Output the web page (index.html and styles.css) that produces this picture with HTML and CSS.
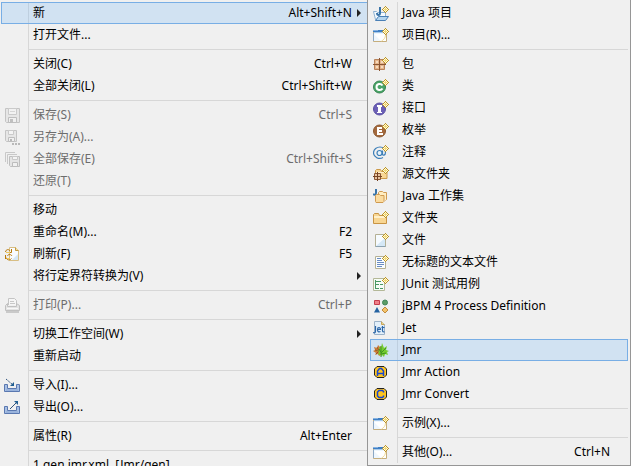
FILE: index.html
```html
<!DOCTYPE html>
<html lang="zh-CN">
<head>
<meta charset="UTF-8" />
<meta name="viewport" content="width=device-width, initial-scale=1" />
<title>文件</title>
<link rel="stylesheet" href="styles.css">
</head>
<body>

<!-- Shared icon parts -->
<svg class="defs" aria-hidden="true">
  <symbol id="star" viewBox="0 0 16 16">
    <path d="M12 1h1v2h1v1h2v1h-2v1h-1v2h-1V6h-1V5H9V4h2V3h1z" fill="#fffbd8"/>
    <path d="M12 1h1v1h-1zM11 2h1v1h-1zM13 2h1v1h-1zM10 3h1v1h-1zM14 3h1v1h-1zM9 4h1v1H9zM15 4h1v1h-1zM10 5h1v1h-1zM14 5h1v1h-1zM11 6h1v1h-1zM13 6h1v1h-1zM12 7h1v1h-1z" fill="#bd9426"/>
    <path d="M12 3h1v1h1v1h-1v1h-1V5h-1V4h1z" fill="#f2d774"/>
  </symbol>
  <symbol id="window" viewBox="0 0 16 16">
    <path d="M.5 3.500h13v11h-13z" fill="#eef6fd" stroke="#c6ae7c"/>
    <path d="M1 7h12v7H8z" fill="#fff"/>
    <path d="M0 3h10v2H0z" fill="#3f7fc4"/><path d="M0 3h5v1H0z" fill="#86b2e0"/>
    <path d="M1 5h9v1H1z" fill="#a8cbed"/>
    <path d="M.5 6v8" stroke="#8ba7c4"/>
    <path d="M12.500 8c0 3-2 5-4 6" fill="none" stroke="#f1dc9c"/>
    <use href="#star"/>
  </symbol>
  <symbol id="floppy" viewBox="0 0 16 16">
    <path d="M1.500 1.500h14v14h-13l-1-1z" fill="#e6e6e6" stroke="#c4c4c4"/>
    <path d="M4.500 1.500h8v6h-8z" fill="#f2f2f2" stroke="#cacaca"/>
    <path d="M6 4.500h5" stroke="#d6d6d6"/>
    <path d="M4.500 10.500h8v5h-8z" fill="#f0f0f0" stroke="#bebebe"/>
    <path d="M6 12h3v3H6z" fill="#c0c0c0"/>
  </symbol>
</svg>

<div class="screen">
  <div class="menu file-menu" role="menu">
    <button class="item active" role="menuitem"><span class="icon"></span><span class="label">新</span><kbd>Alt+Shift+N</kbd><i class="arrow"></i></button>
    <button class="item" role="menuitem"><span class="icon"></span><span class="label">打开文件...</span></button>
    <div class="separator"></div>
    <button class="item" role="menuitem"><span class="icon"></span><span class="label">关闭(C)</span><kbd>Ctrl+W</kbd></button>
    <button class="item" role="menuitem"><span class="icon"></span><span class="label">全部关闭(L)</span><kbd>Ctrl+Shift+W</kbd></button>
    <div class="separator"></div>
    <button class="item" role="menuitem" disabled><span class="icon"><svg viewBox="0 0 16 16"><use href="#floppy"/></svg></span><span class="label">保存(S)</span><kbd>Ctrl+S</kbd></button>
    <button class="item" role="menuitem" disabled><span class="icon"><svg viewBox="0 0 16 16"><path d="M1.500 1.500h11v11h-10l-1-1z" fill="#e6e6e6" stroke="#c4c4c4"/><path d="M4.500 1.500h5v4h-5z" fill="#f4f4f4" stroke="#cacaca"/><path d="M4.500 8.500h6v4h-6z" fill="#f0f0f0" stroke="#bebebe"/><path d="M6 10h2v2H6zM8 14h2v2H8zM11 14h2v2h-2zM14 14h2v2h-2z" fill="#b8b8b8"/></svg></span><span class="label">另存为(A)...</span></button>
    <button class="item" role="menuitem" disabled><span class="icon"><svg viewBox="0 0 16 16"><path d="M1.500 11V1.500H11M3.500 13V3.500H13" fill="none" stroke="#c8c8c8"/><path d="M5.500 5.500h10v10h-9l-1-1z" fill="#e4e4e4" stroke="#bebebe"/><path d="M8.500 5.500h5v3h-5z" fill="#f4f4f4" stroke="#c8c8c8"/><path d="M8.500 11.500h5v4h-5z" fill="#f0f0f0" stroke="#bcbcbc"/></svg></span><span class="label">全部保存(E)</span><kbd>Ctrl+Shift+S</kbd></button>
    <button class="item" role="menuitem" disabled><span class="icon"></span><span class="label">还原(T)</span></button>
    <div class="separator"></div>
    <button class="item" role="menuitem"><span class="icon"></span><span class="label">移动</span></button>
    <button class="item" role="menuitem"><span class="icon"></span><span class="label">重命名(M)...</span><kbd>F2</kbd></button>
    <button class="item" role="menuitem"><span class="icon"><svg viewBox="0 0 16 16"><path d="M5.500 1.500h6l3 3v10h-9z" fill="#f8fbff" stroke="#d8be84"/><path d="M8 14h6V8z" fill="#d5e7f6"/><path d="M11.500 1.500v3h3" fill="#f5e2a8" stroke="#c29a3e"/><path d="M1.500 6C2 3 5 3 6 5M7.500 3v3.500H4M8 10C7 8 4 8 3.500 10M1.500 9v4M2 11.500c1 3 4 3 5.500 1" fill="none" stroke="#b97908"/><path d="M2 6.500h4M3 12.500h3" stroke="#f0c860"/></svg></span><span class="label">刷新(F)</span><kbd>F5</kbd></button>
    <button class="item" role="menuitem"><span class="icon"></span><span class="label">将行定界符转换为(V)</span><i class="arrow"></i></button>
    <div class="separator"></div>
    <button class="item" role="menuitem" disabled><span class="icon"><svg viewBox="0 0 16 16"><path d="M4.500 8V1.500h6l2 2V8" fill="#f6f6f6" stroke="#c4c4c4"/><path d="M6 4.500h4M6 6.500h5" stroke="#c8c8c8"/><path d="M1.500 8.500l2-2v3h9v-3l3 2v5h-14z" fill="#e4e4e4" stroke="#c0c0c0"/><path d="M3 11.500h11" stroke="#f8f8f8"/><path d="M2 14h13v2H2z" fill="#cacaca"/></svg></span><span class="label">打印(P)...</span><kbd>Ctrl+P</kbd></button>
    <div class="separator"></div>
    <button class="item" role="menuitem"><span class="icon"></span><span class="label">切换工作空间(W)</span><i class="arrow"></i></button>
    <button class="item" role="menuitem"><span class="icon"></span><span class="label">重新启动</span></button>
    <div class="separator"></div>
    <button class="item" role="menuitem"><span class="icon"><svg viewBox="0 0 16 16"><path d="M.5 7.500h3v4h9v-4h3v7H.5z" fill="#a8c0e4" stroke="#5a78b0"/><path d="M2 13h12" stroke="#8aa6d4"/><path d="M2 2l7 6" stroke="#34567f" stroke-dasharray="2 1"/><path d="M10 5v4H6z" fill="#1f5d91"/></svg></span><span class="label">导入(I)...</span></button>
    <button class="item" role="menuitem"><span class="icon"><svg viewBox="0 0 16 16"><path d="M.5 7.500h3v4h9v-4h3v7H.5z" fill="#a8c0e4" stroke="#5a78b0"/><path d="M2 13h12" stroke="#8aa6d4"/><path d="M6 10l6-6" stroke="#34567f"/><path d="M10 2h4v4z" fill="#1f5d91"/></svg></span><span class="label">导出(O)...</span></button>
    <div class="separator"></div>
    <button class="item" role="menuitem"><span class="icon"></span><span class="label">属性(R)</span><kbd>Alt+Enter</kbd></button>
    <div class="separator"></div>
    <button class="item" role="menuitem"><span class="icon"></span><span class="label">1 gen.jmr.xml  [Jmr/gen]</span></button>
  </div>

  <div class="menu submenu" role="menu">
    <button class="item" role="menuitem"><span class="icon"><svg viewBox="0 0 16 16"><path d="M.5 6.500h3l1 1h8v7h-10z" fill="#f4faff" stroke="#8fb2d2"/><path d="M2.500 15.500l3-4h10l-3 4z" fill="#b4d5ef" stroke="#4a80b6"/><path d="M7 2v6c0 2.500-3 2.500-3 0" fill="none" stroke="#3a74a8" stroke-width="2"/><use href="#star"/></svg></span><span class="label">Java 项目</span></button>
    <button class="item" role="menuitem"><span class="icon"><svg viewBox="0 0 16 16"><use href="#window"/></svg></span><span class="label">项目(R)...</span></button>
    <div class="separator"></div>
    <button class="item" role="menuitem"><span class="icon"><svg viewBox="0 0 16 16"><path d="M1.500 3.500h10v10h-10z" fill="#e5b58b" stroke="#b8825a"/><path d="M3 5h2v2H3zM8 5h2v2H8zM3 10h2v2H3zM8 10h2v2H8z" fill="#f6dcc0"/><path d="M6.500 2v13M0 8.500h13" stroke="#8a5634"/><use href="#star"/></svg></span><span class="label">包</span></button>
    <button class="item" role="menuitem"><span class="icon"><svg viewBox="0 0 16 16"><circle cx="6.500" cy="9" r="6" fill="#4aa468" stroke="#35844f"/><path d="M9.500 7.500C8 5 3.500 5.500 3.500 9S8 13 9.500 10.500" fill="none" stroke="#fff" stroke-width="2"/><use href="#star"/></svg></span><span class="label">类</span></button>
    <button class="item" role="menuitem"><span class="icon"><svg viewBox="0 0 16 16"><circle cx="6.500" cy="9" r="6" fill="#6c60b6" stroke="#5a4fa4"/><path d="M4 5h5v2H8v5h1v1H4v-1h1V7H4z" fill="#fff"/><use href="#star"/></svg></span><span class="label">接口</span></button>
    <button class="item" role="menuitem"><span class="icon"><svg viewBox="0 0 16 16"><circle cx="6.500" cy="9" r="6" fill="#a4693d" stroke="#8a572f"/><path d="M4 5h5v2H6v1h3v2H6v1h4v2H4z" fill="#fff"/><use href="#star"/></svg></span><span class="label">枚举</span></button>
    <button class="item" role="menuitem"><span class="icon"><svg viewBox="0 0 16 16"><path d="M10 13.500C6 16 .5 13 .5 9S4 3 7 3s5.500 2.500 5.500 5.500c0 3-3 3.500-3 1.500V6.500" fill="none" stroke="#3d7fb8" stroke-width="1.200"/><circle cx="6.500" cy="9" r="2.500" fill="#e4f1fa" stroke="#3d7fb8" stroke-width="1.200"/><use href="#star"/></svg></span><span class="label">注释</span></button>
    <button class="item" role="menuitem"><span class="icon"><svg viewBox="0 0 16 16"><path d="M2.500 12.500v-8l1-1h4l1 2h5.500v7z" fill="#f9d795" stroke="#cc9a4a"/><path d="M3 6.500h10" stroke="#fff1cd"/><path d="M1.500 7.500h6v6h-6z" fill="#e9c4a0" stroke="#8a5634"/><path d="M4.500 6v9M0 10.500h9" stroke="#754322"/><use href="#star"/></svg></span><span class="label">源文件夹</span></button>
    <button class="item" role="menuitem"><span class="icon"><svg viewBox="0 0 16 16"><path d="M3 1v4c0 2-2 2-3 1" fill="none" stroke="#3a74a8" stroke-width="2"/><path d="M5.500 9V4.500l1-1h3l1 1h3v7l-1 1" fill="#ffedc1" stroke="#d09a50"/><path d="M2.500 13.500v-6l1-1h3l1 1h3.500v6l-1 1h-7z" fill="#fbdca0" stroke="#d09a50"/></svg></span><span class="label">Java 工作集</span></button>
    <button class="item" role="menuitem"><span class="icon"><svg viewBox="0 0 16 16"><path d="M.5 13.500v-9l1-1h4l1 2h7v8z" fill="#f8d692" stroke="#c89444"/><path d="M1 7h12" stroke="#fff0c9" stroke-width="2"/><use href="#star"/></svg></span><span class="label">文件夹</span></button>
    <button class="item" role="menuitem"><span class="icon"><svg viewBox="0 0 16 16"><path d="M2.500 2.500h10v12h-10z" fill="#f6fbff" stroke="#b4b094"/><path d="M3 14l9-8v8z" fill="#d5e8f6"/><path d="M2.500 14.500h10" stroke="#8ca2b0"/><use href="#star"/></svg></span><span class="label">文件</span></button>
    <button class="item" role="menuitem"><span class="icon"><svg viewBox="0 0 16 16"><path d="M2.500 2.500h10v12h-10z" fill="#fafdff" stroke="#b4b094"/><path d="M4 4.500h4M4 6.500h5M4 8.500h7M4 10.500h7M4 12.500h5" stroke="#6a8cc2"/><use href="#star"/></svg></span><span class="label">无标题的文本文件</span></button>
    <button class="item" role="menuitem"><span class="icon"><svg viewBox="0 0 16 16"><path d="M.5 2.500h11v12H.5z" fill="#f6fcf6" stroke="#b4b898"/><path d="M2.500 4v9M2 5.500h6M2 8.500h4M7 8.500h3M2 12.500h4M7 12.500h3" fill="none" stroke="#4a9864"/><use href="#star"/></svg></span><span class="label">JUnit 测试用例</span></button>
    <button class="item" role="menuitem"><span class="icon"><svg viewBox="0 0 16 16"><path d="M1.500 2.500h5v4h-5z" fill="#f08088" stroke="#c43c4c"/><circle cx="12" cy="4.500" r="2.500" fill="#5b9c66" stroke="#42865a"/><path d="M4 9l3 5.500H1z" fill="#2462a1"/><path d="M12 9l3 3-3 3-3-3z" fill="#f4c36b" stroke="#c08a3c"/></svg></span><span class="label">jBPM 4 Process Definition</span></button>
    <button class="item" role="menuitem"><span class="icon"><svg viewBox="0 0 16 16"><path d="M1.500 1.500h7l3 3v10h-10z" fill="#e2effa" stroke="#9cb2c8"/><path d="M8.500 1.500v3h3" fill="#f3d87f" stroke="#c8a45c"/><path d="M2.500 6v5c0 2-1 2-2.500 1.500M4.500 9.500h3c0-2.500-3-2.500-3 0 0 3 2 2.500 3 2M9.500 6v5c0 1 1 1 2 1M8.500 7.500h3" fill="none" stroke="#2b66a8" stroke-width="1.200"/></svg></span><span class="label">Jet</span></button>
    <button class="item active" role="menuitem"><span class="icon"><svg viewBox="0 0 16 16"><path d="M6 14l-1-2-3 1 1-2-3-2 2-1-1-3 3 1 1-3 2 2 1-1v9z" fill="#cc7c38"/><path d="M2 8l4 1M4 5l2 4M3 12l3-3" stroke="#9a5626"/><path d="M8 15v-3l-3 1 1-3-2-2 3 1-1-4 2 1 1-5 2 5 3-2-1 4 3 1-2 1 1 3-3-1-1 3-2-2z" fill="#74cc30"/><path d="M8 15V4M8 11l5-5M8 12l5-1M8 10L6 7" fill="none" stroke="#409420"/></svg></span><span class="label">Jmr</span></button>
    <button class="item" role="menuitem"><span class="icon"><svg viewBox="0 0 16 16"><path d="M4 2.500h7l2.500 2.500v6L11 13.500H4L1.500 11V5z" fill="#ffc51f" stroke="#222"/><path d="M4.500 12V7l2-2.500h2l2 2.500v5M4.500 9.500h6" fill="none" stroke="#1646d2" stroke-width="1.500"/></svg></span><span class="label">Jmr Action</span></button>
    <button class="item" role="menuitem"><span class="icon"><svg viewBox="0 0 16 16"><path d="M4 2.500h7l2.500 2.500v6L11 13.500H4L1.500 11V5z" fill="#ffc51f" stroke="#222"/><path d="M10.500 6.500v-1l-1-1H6l-1.500 1.500v4L6 11.500h3.500l1-1v-1" fill="none" stroke="#1646d2" stroke-width="1.500"/></svg></span><span class="label">Jmr Convert</span></button>
    <div class="separator"></div>
    <button class="item" role="menuitem"><span class="icon"><svg viewBox="0 0 16 16"><use href="#window"/></svg></span><span class="label">示例(X)...</span></button>
    <div class="separator"></div>
    <button class="item" role="menuitem"><span class="icon"><svg viewBox="0 0 16 16"><use href="#window"/></svg></span><span class="label">其他(O)...</span><kbd>Ctrl+N</kbd></button>
  </div>
</div>

</body>
</html>
```
FILE: styles.css
```css
* {
  box-sizing: border-box;
}
body {
  margin: 0;
  background: #f0f0f0;
  color: #000;
  font-family: "Noto Sans", "Noto Sans CJK SC", sans-serif;
  font-size: 12px;
  overflow: hidden;
}
.defs {
  display: none;
}
.screen {
  display: grid;
  grid-template-columns: 367fr 264fr;
  align-items: start;
  height: 100vh;
}
.menu {
  display: flex;
  flex-direction: column;
  padding: 2px;
  background-color: #f0f0f0;
  background-image: linear-gradient(#d7d7d7, #d7d7d7);
  background-origin: content-box;
  background-position: 27px 0;
  background-size: 1px 100%;
  background-repeat: no-repeat;
}
.file-menu {
  margin-right: -3px;
  padding-left: 1px;
  padding-right: 0;
}
.submenu {
  position: relative;
  z-index: 1;
  border: 1px solid #969696;
  border-top: none;
}
/* Menu rows */
.item {
  position: relative;
  display: flex;
  align-items: center;
  width: 100%;
  height: 22px;
  padding: 0 17px 0 2px;
  border: 1px solid transparent;
  background: transparent;
  color: inherit;
  font: inherit;
  line-height: 20px;
  text-align: left;
  white-space: pre;
}
.item:hover,
.item.active {
  background: rgba(116, 184, 248, 0.25);
  border-color: #78aee5;
}
.item:disabled {
  color: #6d6d6d;
  background: transparent;
  border-color: transparent;
}
.icon {
  flex: none;
  width: 29px;
  height: 16px;
}
.icon svg {
  display: block;
  width: 16px;
  height: 16px;
}
.label {
  flex: 1;
}
kbd {
  font: inherit;
}
.arrow {
  position: absolute;
  right: 8px;
  border: 4px solid transparent;
  border-left-color: #222;
  border-right: none;
}
.separator {
  height: 7px;
  margin-left: 27px;
  padding-top: 3px;
}
.separator::before {
  content: "";
  display: block;
  height: 1px;
  background: #d7d7d7;
}
```
